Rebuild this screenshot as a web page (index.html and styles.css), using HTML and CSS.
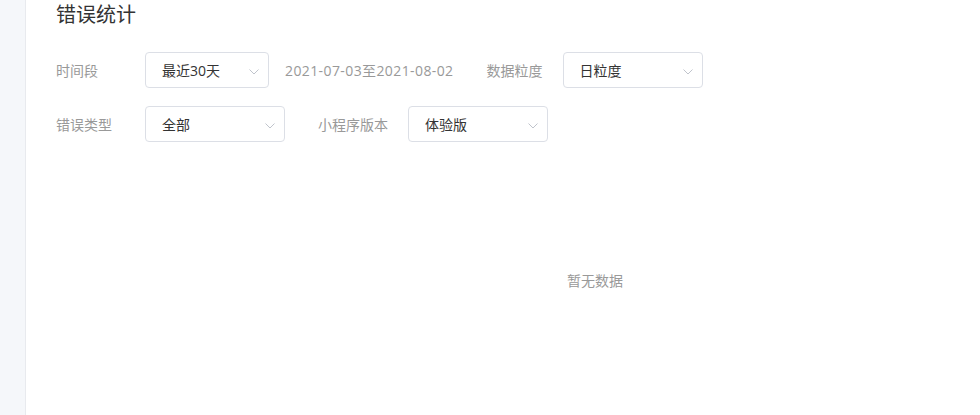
FILE: index.html
```html
<!DOCTYPE html>
<html lang="zh-CN">
<head>
    <meta charset="UTF-8">
    <meta name="viewport" content="width=device-width, initial-scale=1.0">
    <title>错误统计</title>
    <link rel="stylesheet" href="styles.css">
</head>
<body>
    <div class="layout">
        <div class="sidebar"></div>
        <div class="main">
            <h2 class="page-title">错误统计</h2>

            <div class="filter-row">
                <div class="field">
                    <span class="field-label first">时间段</span>
                    <div class="select short">
                        <span>最近30天</span>
                        <svg class="arrow" width="10" height="6" viewBox="0 0 10 6"><path d="M0.5 0.5L5 5L9.5 0.5" fill="none" stroke="#c0c4cc" stroke-width="1"/></svg>
                    </div>
                    <span class="date-range">2021-07-03至2021-08-02</span>
                </div>
                <div class="field">
                    <span class="field-label">数据粒度</span>
                    <div class="select">
                        <span>日粒度</span>
                        <svg class="arrow" width="10" height="6" viewBox="0 0 10 6"><path d="M0.5 0.5L5 5L9.5 0.5" fill="none" stroke="#c0c4cc" stroke-width="1"/></svg>
                    </div>
                </div>
            </div>

            <div class="filter-row">
                <div class="field">
                    <span class="field-label first">错误类型</span>
                    <div class="select">
                        <span>全部</span>
                        <svg class="arrow" width="10" height="6" viewBox="0 0 10 6"><path d="M0.5 0.5L5 5L9.5 0.5" fill="none" stroke="#c0c4cc" stroke-width="1"/></svg>
                    </div>
                </div>
                <div class="field">
                    <span class="field-label">小程序版本</span>
                    <div class="select">
                        <span>体验版</span>
                        <svg class="arrow" width="10" height="6" viewBox="0 0 10 6"><path d="M0.5 0.5L5 5L9.5 0.5" fill="none" stroke="#c0c4cc" stroke-width="1"/></svg>
                    </div>
                </div>
            </div>

            <div class="chart">
                <span class="empty">暂无数据</span>
            </div>
        </div>
    </div>
</body>
</html>
```

FILE: styles.css
```css
body {
    margin: 0;
    font-family: "Open Sans", "Noto Sans CJK SC", sans-serif;
    font-size: 14px;
    color: #333;
    background-color: #fff;
}
.layout {
    display: flex;
    height: 415px;
    overflow: hidden;
}
.sidebar {
    width: 25px;
    flex-shrink: 0;
    background-color: #f5f7fa;
    border-right: 1px solid #e8eaee;
}
.main {
    flex: 1;
    padding-left: 30px;
    overflow: hidden;
}
.page-title {
    margin: 0 0 23px;
    padding-top: 1px;
    font-size: 20px;
    font-weight: normal;
    line-height: 28px;
    color: #333;
}
.filter-row {
    display: flex;
    align-items: center;
    margin-bottom: 18px;
}
.field {
    display: flex;
    align-items: center;
    margin-right: 33px;
}
.field-label {
    color: #999;
    margin-right: 20px;
    white-space: nowrap;
}
.field-label.first {
    width: 89px;
    margin-right: 0;
}
.select {
    box-sizing: border-box;
    width: 140px;
    height: 36px;
    display: flex;
    align-items: center;
    justify-content: space-between;
    padding: 0 9px 0 16px;
    border: 1px solid #dcdfe6;
    border-radius: 4px;
    background-color: #fff;
}
.select.short {
    width: 124px;
}
.arrow {
    margin-top: 4px;
}
.date-range {
    margin-left: 16px;
    color: #999;
    letter-spacing: 0.4px;
    white-space: nowrap;
}
.chart {
    width: 1078px;
    height: 240px;
    display: flex;
    align-items: center;
    justify-content: center;
}
.empty {
    color: #999;
    font-size: 14px;
}
```
